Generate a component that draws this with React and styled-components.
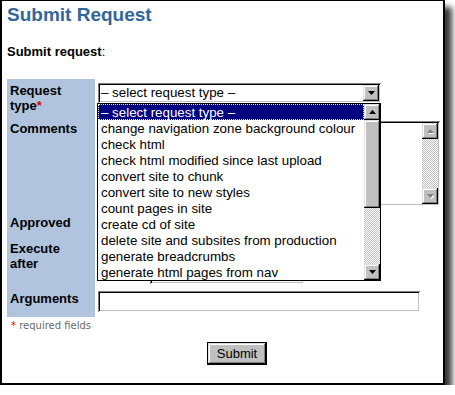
import React from "react";
import styled, { createGlobalStyle, css } from "styled-components";

const Global = createGlobalStyle`
  html, body { margin: 0; padding: 0; background: #fff; }
  body { font-family: "Liberation Sans", Arial, sans-serif; }
`;

const sans = `"Liberation Sans", Arial, sans-serif`;

const inset = css`
  box-shadow: inset 1px 1px 0 #808080, inset -1px -1px 0 #fff,
    inset 2px 2px 0 #000, inset -2px -2px 0 #c0c0c0;
`;

const raised = css`
  background: #c0c0c0;
  box-shadow: inset -1px -1px 0 #000, inset 1px 1px 0 #dfdfdf,
    inset -2px -2px 0 #808080, inset 2px 2px 0 #fff;
`;

const Window = styled.div`
  box-sizing: border-box;
  width: 445px;
  height: 385px;
  border: 2px solid #000;
  border-top-width: 1px;
  padding: 3px 5px 0 5px;
  background: #fff;
  box-shadow: 7px 7px 6px rgba(0, 0, 0, 0.78);
  display: flex;
  flex-direction: column;
`;

const Title = styled.h1`
  margin: 0;
  font: bold 19px/22px ${sans};
  color: #336699;
`;

const Subtitle = styled.p`
  margin: 18px 0 0;
  font: bold 13px/15px ${sans};
  color: #000;
`;

const Colon = styled.span`
  font-weight: normal;
`;

const FormGrid = styled.div`
  margin-top: 20px;
  display: grid;
  grid-template-columns: 88px 1fr;
  grid-template-rows: 38px 94px 26px 50px 30px;
`;

const Label = styled.div`
  background: #b0c4de;
  padding: 4px 0 0 3px;
  font: bold 13px/15px ${sans};
  color: #000;
`;

const Req = styled.span`
  color: #e00000;
`;

const Field = styled.div`
  position: relative;
  padding: ${(p) => p.$top ?? 4}px 0 0 ${(p) => p.$left ?? 3}px;
`;

const SelectBox = styled.div`
  box-sizing: border-box;
  position: relative;
  width: 283px;
  height: 20px;
  background: #fff;
  ${inset}
  display: flex;
  align-items: center;
  padding: 0 2px 0 3px;
  font: 13.33px/16px ${sans};
  color: #000;
  white-space: nowrap;
`;

const SelectText = styled.span`
  flex: 1;
`;

const ArrowBtn = styled.div`
  box-sizing: border-box;
  width: 16px;
  height: ${(p) => p.$h ?? 16}px;
  flex: none;
  ${raised}
  display: flex;
  align-items: center;
  justify-content: center;
`;

const DropList = styled.div`
  box-sizing: border-box;
  position: absolute;
  top: 20px;
  left: -1px;
  width: 284px;
  height: 178px;
  border: 1px solid #000;
  background: #fff;
  display: flex;
  z-index: 5;
`;

const Options = styled.div`
  flex: 1;
  overflow: hidden;
`;

const Option = styled.div`
  box-sizing: border-box;
  height: 16px;
  padding-left: 3px;
  font: 13.33px/18px ${sans};
  white-space: nowrap;
  color: ${(p) => (p.$sel ? "#fff" : "#000")};
  background: ${(p) => (p.$sel ? "#000080" : "transparent")};
  outline: ${(p) => (p.$sel ? "1px dotted #ffff80" : "none")};
  outline-offset: -1px;
`;

const ScrollBar = styled.div`
  width: 16px;
  flex: none;
  display: flex;
  flex-direction: column;
`;

const Thumb = styled.div`
  height: ${(p) => p.$h}px;
  flex: none;
  ${raised}
`;

const Track = styled.div`
  flex: 1;
  background: repeating-conic-gradient(#c0c0c0 0 25%, #fff 0 50%) 0 0 / 2px 2px;
`;

const TextArea = styled.div`
  box-sizing: border-box;
  width: 342px;
  height: 85px;
  background: #fff;
  ${inset}
  padding: 2px;
  display: flex;
  justify-content: flex-end;
`;

const TextInput = styled.div`
  box-sizing: border-box;
  width: ${(p) => p.$w}px;
  height: ${(p) => p.$h ?? 20}px;
  background: #fff;
  ${inset}
`;

const Check = styled.div`
  width: 13px;
  height: 13px;
  margin-top: 2px;
  background: #fff;
  ${inset}
`;

const Note = styled.div`
  margin-top: 3px;
  padding-left: 4px;
  font: 10px/12px "DejaVu Sans", Verdana, sans-serif;
  color: #6a6a6a;
`;

const NoteStar = styled.span`
  color: #e00000;
`;

const ButtonRow = styled.div`
  margin-top: 10px;
  padding-left: 200px;
  display: flex;
`;

const Button = styled.button`
  box-sizing: border-box;
  width: 60px;
  height: 23px;
  border: 1px solid #000;
  ${raised}
  font: 13px/1 ${sans};
  color: #000;
  padding: 0 0 1px;
`;

const Arrow = ({ up, disabled }) => (
  <svg width="7" height="5" viewBox="0 0 7 5">
    {disabled && (
      <polygon
        points={up ? "4.5,1 8,5 1,5" : "1,1 8,1 4.5,5"}
        fill="#fff"
      />
    )}
    <polygon
      points={up ? "3.5,0 7,4 0,4" : "0,0 7,0 3.5,4"}
      fill={disabled ? "#808080" : "#000"}
    />
  </svg>
);

const options = [
  "– select request type –",
  "change navigation zone background colour",
  "check html",
  "check html modified since last upload",
  "convert site to chunk",
  "convert site to new styles",
  "count pages in site",
  "create cd of site",
  "delete site and subsites from production",
  "generate breadcrumbs",
  "generate html pages from nav",
];

export default function App() {
  return (
    <>
      <Global />
      <Window>
        <Title>Submit Request</Title>
        <Subtitle>
          Submit request<Colon>:</Colon>
        </Subtitle>
        <FormGrid>
          <Label>
            Request
            <br />
            type<Req>*</Req>
          </Label>
          <Field>
            <SelectBox>
              <SelectText>– select request type –</SelectText>
              <ArrowBtn>
                <Arrow />
              </ArrowBtn>
              <DropList>
                <Options>
                  {options.map((o, i) => (
                    <Option key={o} $sel={i === 0}>
                      {o}
                    </Option>
                  ))}
                </Options>
                <ScrollBar>
                  <ArrowBtn>
                    <Arrow up />
                  </ArrowBtn>
                  <Thumb $h={88} />
                  <Track />
                  <ArrowBtn>
                    <Arrow />
                  </ArrowBtn>
                </ScrollBar>
              </DropList>
            </SelectBox>
          </Field>

          <Label>Comments</Label>
          <Field>
            <TextArea>
              <ScrollBar>
                <ArrowBtn>
                  <Arrow up disabled />
                </ArrowBtn>
                <Track />
                <ArrowBtn>
                  <Arrow disabled />
                </ArrowBtn>
              </ScrollBar>
            </TextArea>
          </Field>

          <Label>Approved</Label>
          <Field $top={5}>
            <Check />
          </Field>

          <Label>
            Execute
            <br />
            after
          </Label>
          <Field $top={27} $left={55}>
            <TextInput $w={154} />
          </Field>

          <Label>Arguments</Label>
          <Field>
            <TextInput $w={322} $h={21} />
          </Field>
        </FormGrid>
        <Note>
          <NoteStar>*</NoteStar> required fields
        </Note>
        <ButtonRow>
          <Button>Submit</Button>
        </ButtonRow>
      </Window>
    </>
  );
}
